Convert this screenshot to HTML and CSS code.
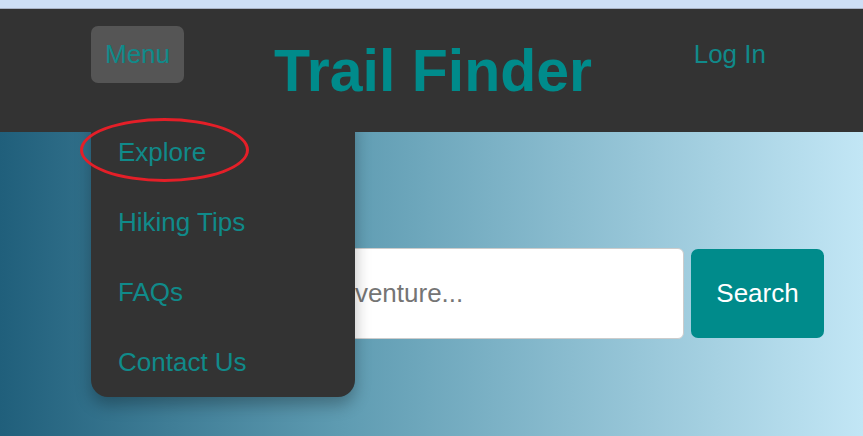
FILE: index.html
```html
<!DOCTYPE html>
<html lang="en">
<head>
<meta charset="utf-8">
<title>Trail Finder</title>
<link rel="stylesheet" href="styles.css">
</head>
<body>
<div class="topstrip"></div>
<div class="page">
  <header class="header">
    <div class="menu-wrap">
      <button class="menu-btn">Menu</button>
    </div>
    <h1 class="title">Trail Finder</h1>
    <a class="login" href="#">Log In</a>
  </header>
  <nav class="dropdown">
    <a class="dd-item" href="#">Explore</a>
    <a class="dd-item" href="#">Hiking Tips</a>
    <a class="dd-item" href="#">FAQs</a>
    <a class="dd-item" href="#">Contact Us</a>
  </nav>
  <div class="annotation"></div>
  <section class="hero">
    <form class="search">
      <input class="search-input" type="text" placeholder="Find your next adventure...">
      <button class="search-btn" type="button">Search</button>
    </form>
  </section>
</div>
</body>
</html>
```

FILE: styles.css
```css
* { box-sizing: border-box; }
html, body { margin: 0; padding: 0; }
body {
  font-family: "Liberation Sans", Arial, sans-serif;
  overflow: hidden;
  background: #bfe3f3;
}
.topstrip {
  height: 9px;
  background: #cedff6;
  border-bottom: 1px solid #a9b3c6;
}
.page { position: relative; }
.header {
  position: relative;
  z-index: 2;
  background: #333333;
  display: grid;
  grid-template-columns: 1fr auto 1fr;
  align-items: start;
  padding: 0 88px 0 91px;
  height: 123px;
}
.menu-wrap { padding-top: 17px; }
.menu-btn {
  font-family: inherit;
  font-size: 26px;
  line-height: 31px;
  color: #108a8a;
  background: #555555;
  border: none;
  border-radius: 7px;
  padding: 13px 14px;
  width: 93px;
  height: 57px;
}
.title {
  margin: 28px 0 0;
  font-size: 59px;
  font-weight: bold;
  color: #008b8b;
  line-height: normal;
}
.login {
  justify-self: end;
  margin: 17px -5px 0 0;
  padding: 13px 14px;
  font-size: 26px;
  line-height: 31px;
  color: #108a8a;
  text-decoration: none;
}
.dropdown {
  position: absolute;
  z-index: 1;
  left: 91px;
  top: 108px;
  width: 264px;
  background: #333333;
  border-radius: 0 0 17px 17px;
  box-shadow: 0 8px 16px rgba(0, 0, 0, 0.28);
  display: flex;
  flex-direction: column;
}
.dd-item {
  display: block;
  padding: 20px 27px;
  font-size: 26px;
  line-height: 30px;
  color: #108a8a;
  text-decoration: none;
}
.annotation {
  position: absolute;
  z-index: 3;
  left: 80px;
  top: 109px;
  width: 169px;
  height: 64px;
  border: 3px solid #e41f28;
  border-radius: 50%;
}
.hero {
  height: 310px;
  background: linear-gradient(90deg, #205f7b 0%, #5f9cb2 40%, #c2e6f5 100%);
  padding-top: 116px;
}
.search {
  display: flex;
  align-items: center;
  gap: 7px;
  margin: 0 0 0 136px;
}
.search-input {
  width: 548px;
  height: 91px;
  border: 1px solid #cccccc;
  border-radius: 6px;
  background: #ffffff;
  padding: 0 20px 0 17px;
  font-family: inherit;
  font-size: 26px;
  color: #333;
}
.search-input::placeholder { color: #757575; }
.search-btn {
  width: 133px;
  height: 89px;
  border: none;
  border-radius: 7px;
  background: #008b8b;
  color: #ffffff;
  font-family: inherit;
  font-size: 26px;
  padding: 0;
}
```
